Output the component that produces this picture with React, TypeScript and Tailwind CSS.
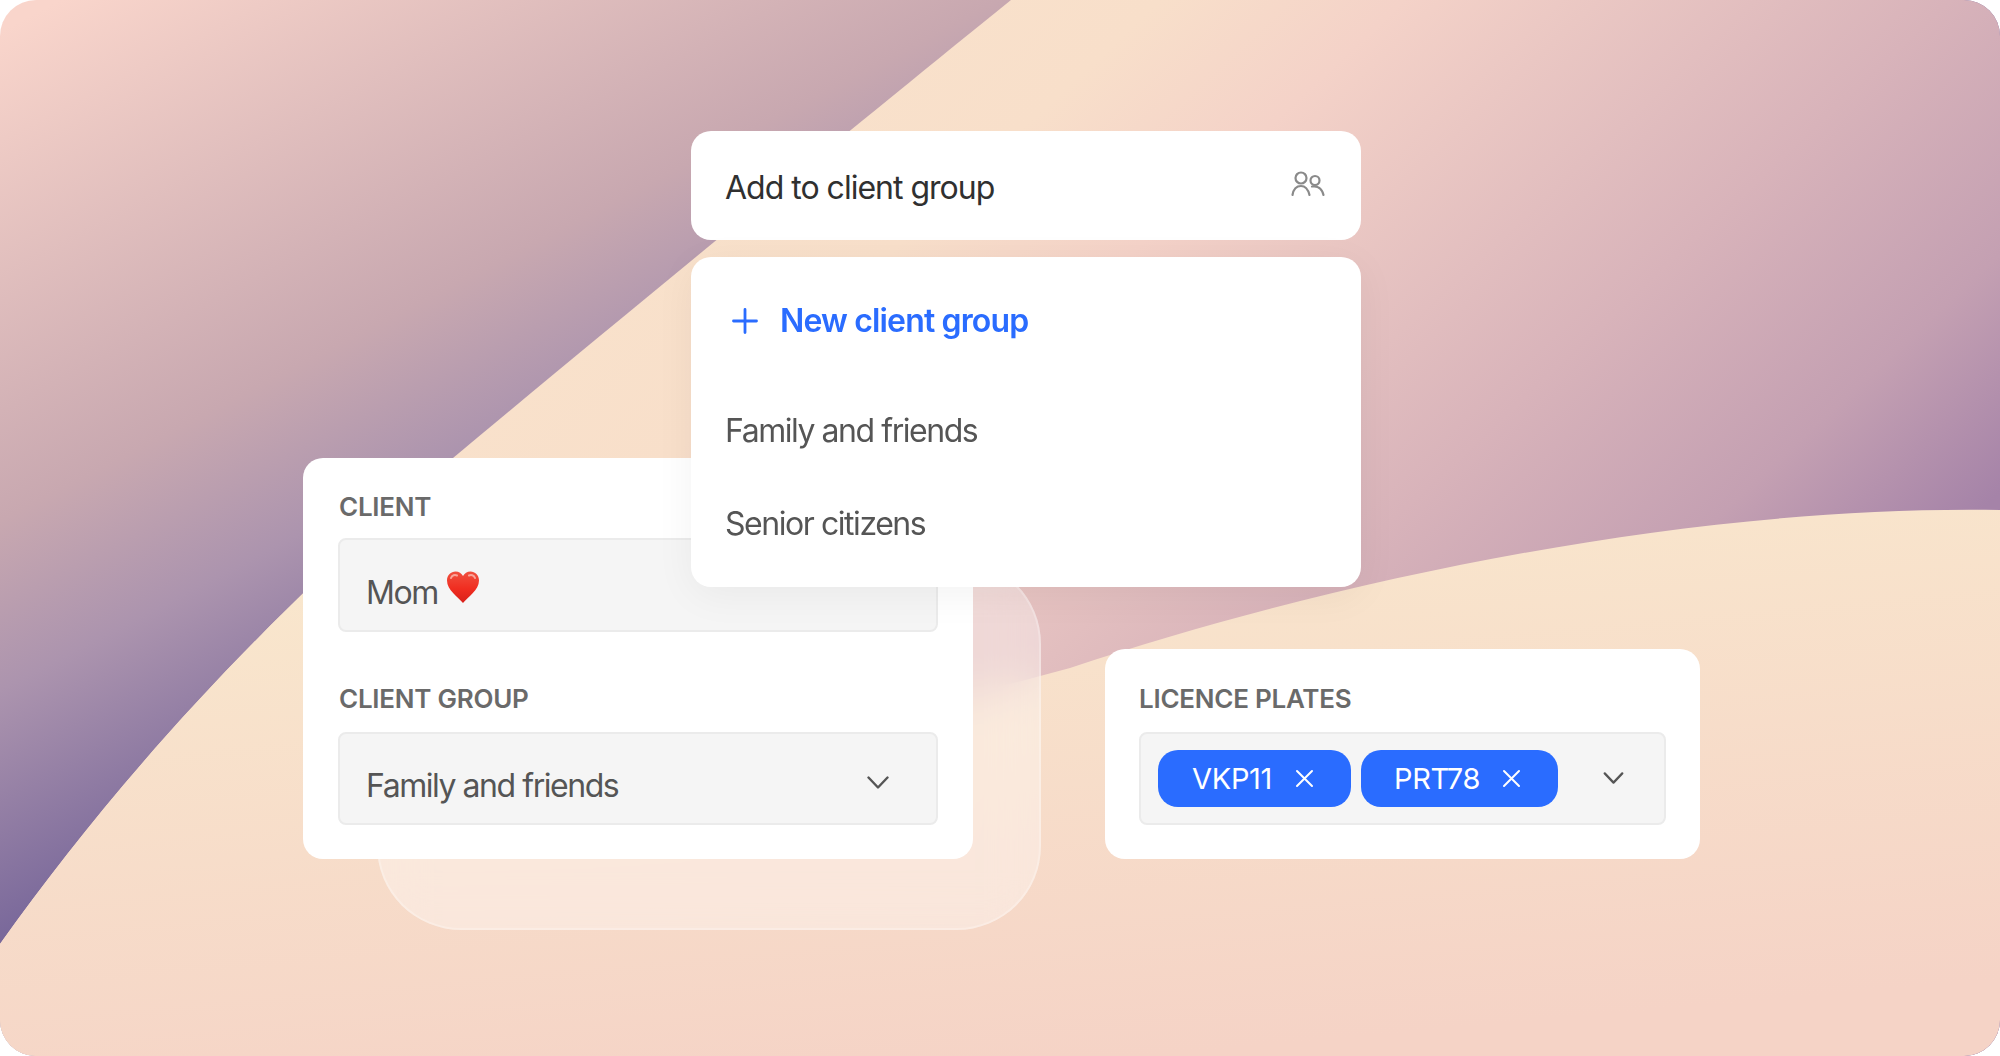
import React from "react";

function Backdrop() {
  return (
    <svg className="absolute inset-0 w-full h-full" viewBox="0 0 2000 1056" aria-hidden="true">
      <defs>
        <linearGradient id="top" gradientUnits="userSpaceOnUse" x1="60" y1="0" x2="435" y2="720">
          <stop offset="0" stopColor="#f9d5cb" />
          <stop offset="0.535" stopColor="#c8a8b0" />
          <stop offset="0.72" stopColor="#ac94ae" />
          <stop offset="1" stopColor="#78679a" />
        </linearGradient>
        <linearGradient id="mid" gradientUnits="userSpaceOnUse" x1="1000" y1="-260" x2="1840" y2="642">
          <stop offset="0" stopColor="#f9e3cc" />
          <stop offset="0.243" stopColor="#f8dfca" />
          <stop offset="0.378" stopColor="#f4d2c8" />
          <stop offset="0.68" stopColor="#d8b3ba" />
          <stop offset="0.858" stopColor="#c4a0b2" />
          <stop offset="1" stopColor="#a583a8" />
        </linearGradient>
        <linearGradient id="low" gradientUnits="userSpaceOnUse" x1="1100" y1="500" x2="1150" y2="1056">
          <stop offset="0" stopColor="#f9e7cd" />
          <stop offset="1" stopColor="#f5d3c6" />
        </linearGradient>
      </defs>
      <rect width="2000" height="1056" fill="url(#top)" />
      <path d="M0 944C110 790 250 630 453 458C600 335 850 130 1011 0H2000V1056H0Z" fill="url(#mid)" />
      <path d="M0 944C110 790 250 630 453 458L800 740L1070 668C1350 575 1700 505 2000 510V1056H0Z" fill="url(#low)" />
    </svg>
  );
}

function Chevron({ className }: { className: string }) {
  return (
    <svg className={className} viewBox="0 0 22 13" fill="none" stroke="#555555" strokeWidth="2.4" strokeLinecap="round" strokeLinejoin="round">
      <path d="M1.5 1.5L11 11.5L20.5 1.5" />
    </svg>
  );
}

function Cross() {
  return (
    <svg className="w-[19px] h-[19px]" viewBox="0 0 19 19" fill="none" stroke="#ffffff" strokeWidth="2" strokeLinecap="round">
      <path d="M2 2L17 17M17 2L2 17" />
    </svg>
  );
}

function Users() {
  return (
    <svg className="w-[34px] h-[26px] -mt-[3px]" viewBox="0 0 34 26" fill="none" stroke="#8a8a8a" strokeWidth="2.2" strokeLinecap="round">
      <circle cx="10" cy="7" r="5.5" />
      <circle cx="24" cy="9.5" r="4.5" />
      <path d="M1.5 24C2.5 18 5.5 15 10 15C14.5 15 17 18 18.5 24" />
      <path d="M21 15.5C26.5 14.5 31 17.5 32.5 24" />
    </svg>
  );
}

function Heart() {
  return (
    <svg className="w-[34px] h-[34px] shrink-0" viewBox="0 0 34 34">
      <defs>
        <linearGradient id="heart" x1="0" y1="0" x2="0" y2="1">
          <stop offset="0" stopColor="#f0503f" />
          <stop offset="0.55" stopColor="#f02d20" />
          <stop offset="1" stopColor="#d8201a" />
        </linearGradient>
      </defs>
      <path d="M17 33C12 27 1 20 1 10.5C1 5 5 1.5 9.5 1.5C13 1.5 15.5 3.5 17 6C18.5 3.5 21 1.5 24.5 1.5C29 1.5 33 5 33 10.5C33 20 22 27 17 33Z" fill="url(#heart)" />
      <path d="M5 8C6 5 9 4.5 11 5.5M23 5.5C25 4.5 28 5 29 8" fill="none" stroke="#f9a59a" strokeWidth="2" strokeLinecap="round" />
    </svg>
  );
}

function Label({ children }: { children: React.ReactNode }) {
  return <div className="text-[26px] leading-[32px] font-semibold tracking-[-0.25px] text-[#6a6a6a]">{children}</div>;
}

function Tag({ text, className }: { text: string; className: string }) {
  return (
    <div className={`h-[57px] rounded-[20px] bg-[#2a6cff] flex items-center text-white text-[29px] tracking-[-0.3px] ${className}`}>
      <span>{text}</span>
      <Cross />
    </div>
  );
}

export default function App() {
  return (
    <div className="relative w-[2000px] h-[1056px] overflow-hidden rounded-[36px] bg-white blur-[0.5px]" style={{ fontFamily: "Inter, 'Noto Sans', sans-serif" }}>
      <Backdrop />

      <div className="absolute left-[377px] top-[560px] w-[664px] h-[370px] rounded-[84px] bg-white/35 border-2 border-white/25 backdrop-blur-xl" />

      <div className="relative flex items-end gap-[132px] pl-[303px] pt-[458px]">
        <div className="w-[670px] h-[401px] rounded-[20px] bg-white px-[35px] pt-[33px]">
          <div className="pl-[1px]"><Label>CLIENT</Label></div>
          <div className="mt-[15px] h-[94px] rounded-[8px] border-2 border-[#ebebeb] bg-[#f5f5f5] pl-[26px] flex items-center gap-[8px] text-[32px] tracking-[-1.45px] text-[#555555]">
            <span className="mt-[16px]">Mom</span>
            <span className="mt-[4px]"><Heart /></span>
          </div>
          <div className="mt-[51px] pl-[1px]"><Label>CLIENT GROUP</Label></div>
          <div className="mt-[17px] h-[93px] rounded-[8px] border-2 border-[#ebebeb] bg-[#f5f5f5] pl-[26px] pr-[47px] flex items-center justify-between text-[32px] tracking-[-1.45px] text-[#555555]">
            <span className="mt-[14px]">Family and friends</span>
            <Chevron className="w-[22px] h-[13px] mt-[8px]" />
          </div>
        </div>

        <div className="w-[595px] h-[210px] rounded-[20px] bg-white px-[34px] pt-[34px]">
          <Label>LICENCE PLATES</Label>
          <div className="mt-[17px] h-[93px] rounded-[8px] border-2 border-[#ebebeb] bg-[#f5f5f5] pl-[17px] pr-[40px] flex items-center">
            <Tag text="VKP11" className="w-[193px] pl-[34px] gap-[23px]" />
            <Tag text="PRT78" className="w-[197px] ml-[10px] pl-[33px] gap-[22px]" />
            <Chevron className="w-[21px] h-[12px] ml-auto -mt-[2px]" />
          </div>
        </div>
      </div>

      <div className="absolute left-[691px] top-[131px] w-[670px] flex flex-col gap-[17px]">
        <div className="h-[109px] rounded-[20px] bg-white pl-[34px] pr-[36px] flex items-center justify-between text-[32px] tracking-[-1px] text-[#303030]">
          <span className="mt-[5px]">Add to client group</span>
          <Users />
        </div>
        <div className="h-[330px] rounded-[20px] bg-white pl-[34px] shadow-[0_8px_40px_rgba(0,0,0,0.05)] flex flex-col text-[32px] tracking-[-1.45px] text-[#555555]">
          <div className="mt-[40px] h-[48px] flex items-center gap-[22px] tracking-[-0.85px] text-[#2a6cff] font-[560]">
            <svg className="w-[26px] h-[26px] ml-[7px]" viewBox="0 0 26 26" fill="none" stroke="#2a6cff" strokeWidth="2.8" strokeLinecap="round">
              <path d="M13 1.5V24.5M1.5 13H24.5" />
            </svg>
            <span>New client group</span>
          </div>
          <div className="mt-[62px] h-[48px] flex items-center">Family and friends</div>
          <div className="mt-[45px] h-[48px] flex items-center">Senior citizens</div>
        </div>
      </div>
    </div>
  );
}
